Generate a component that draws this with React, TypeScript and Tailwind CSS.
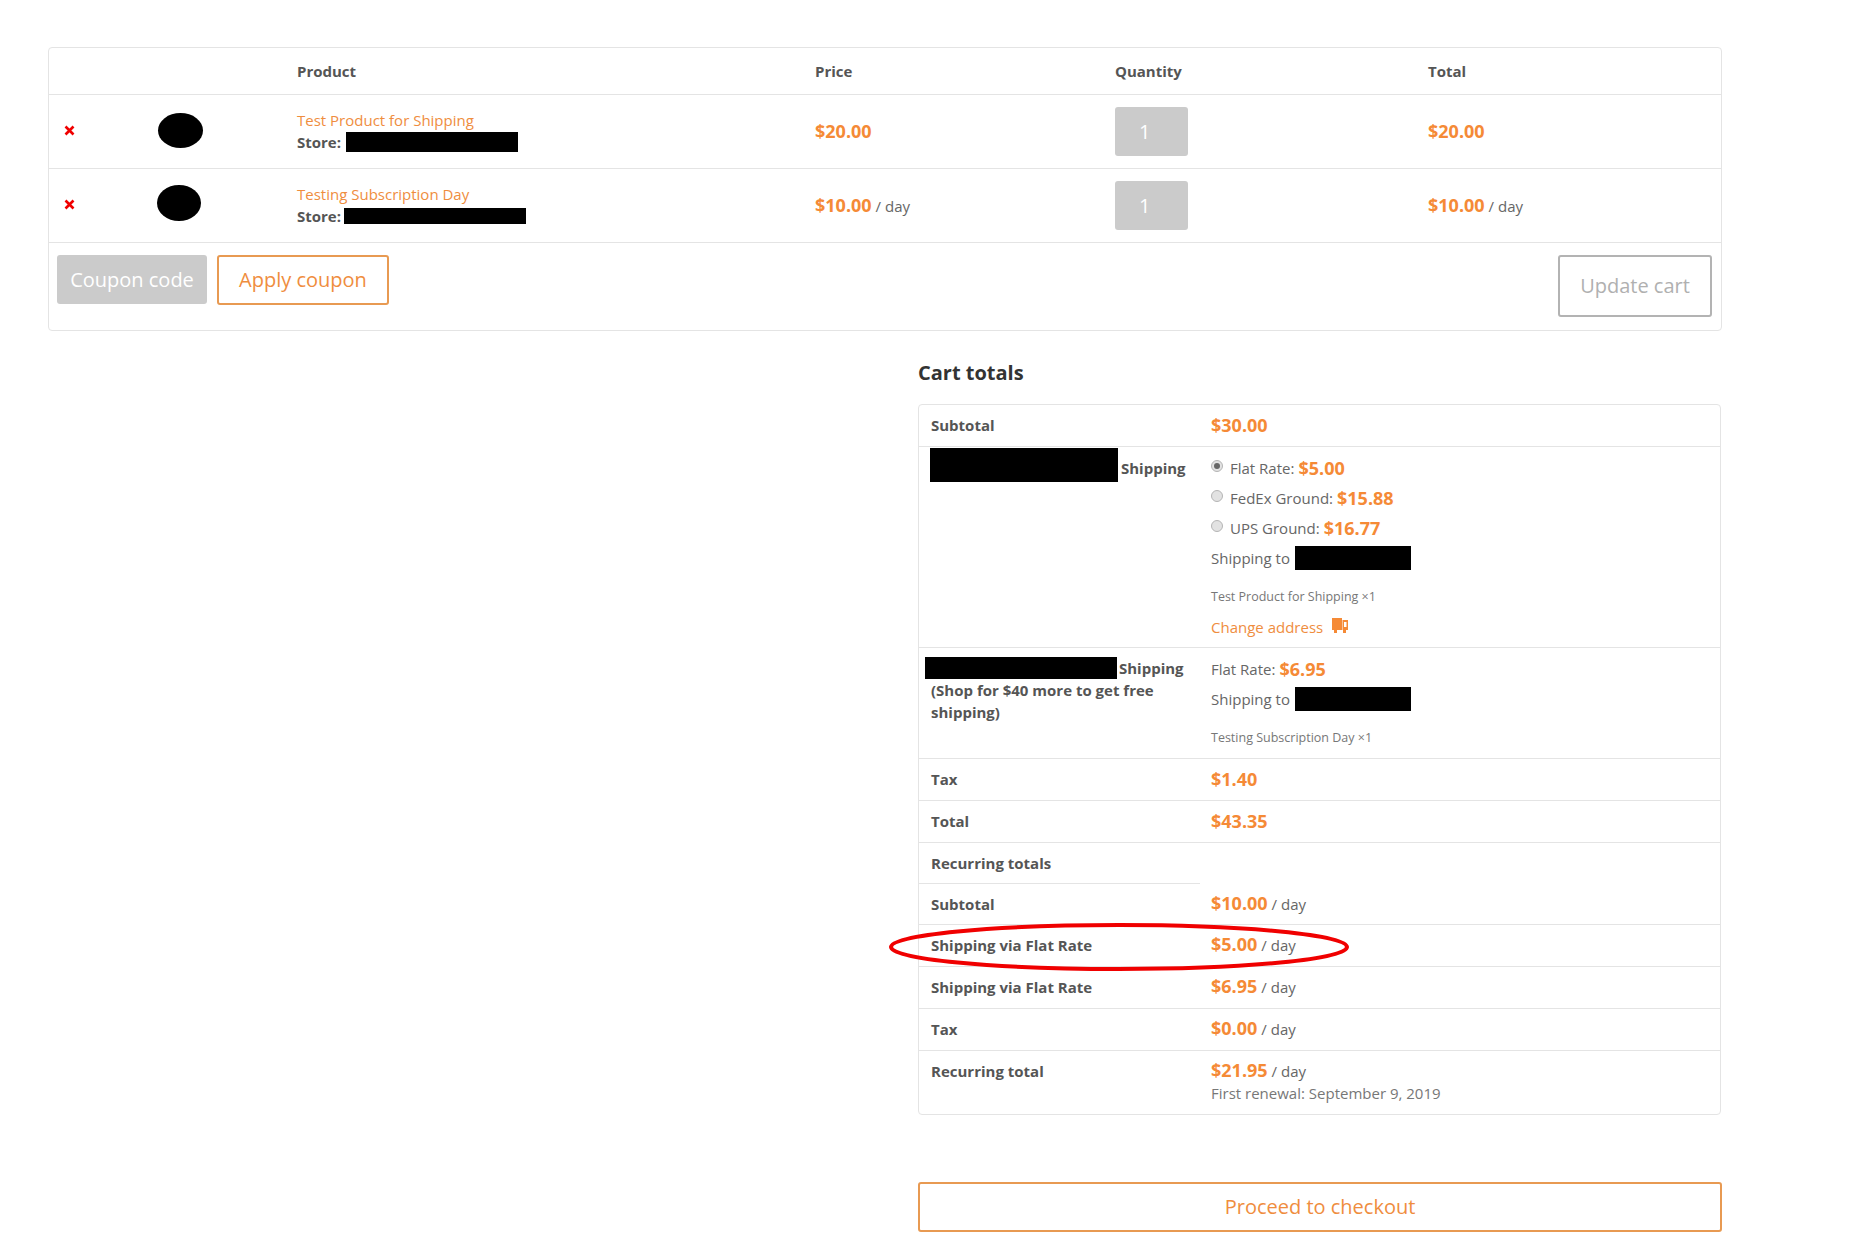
import React from 'react';

const font = 'font-["Open_Sans",sans-serif]';
const price = 'font-bold text-[18px] leading-none text-[#f58a36]';

function Redacted({ className }: { className: string }) {
  return <span className={`inline-block shrink-0 bg-black ${className}`} />;
}

function Price({ value, suffix, className }: { value: string; suffix?: string; className?: string }) {
  return (
    <div className={`flex items-baseline ${className ?? ''}`}>
      <span className={price}>{value}</span>
      {suffix && <span className="ml-1 text-[15px] leading-none text-[#666]">{suffix}</span>}
    </div>
  );
}

function Remove() {
  return (
    <svg width="11" height="11" viewBox="0 0 11 11" className="mb-[2px] block">
      <path d="M1.5 1.5l8 8M9.5 1.5l-8 8" stroke="#f00000" strokeWidth="2.6" />
    </svg>
  );
}

function CartRow({
  name,
  redact,
  blob,
  value,
  suffix,
}: {
  name: string;
  redact: string;
  blob: string;
  value: string;
  suffix?: string;
}) {
  return (
    <div className="grid h-[74px] grid-cols-[110px_123px_518px_300px_313px_1fr] items-center border-b border-[#e4e4e4] pl-[15px]">
      <Remove />
      <div className={`rounded-[50%] bg-black ${blob}`} />
      <div className="mb-[2px]">
        <div className="text-[15px] leading-[22px] text-[#ef8d3e]">{name}</div>
        <div className="flex items-center text-[15px] leading-[22px] font-bold text-[#555]">
          Store:
          <Redacted className={redact} />
        </div>
      </div>
      <Price value={value} suffix={suffix} className="mb-[2px]" />
      <div className="flex h-[49px] w-[73px] items-center rounded-[3px] bg-[#cbcbcb] pl-[24px] text-[20px] text-white">
        1
      </div>
      <Price value={value} suffix={suffix} className="mb-[2px]" />
    </div>
  );
}

function Row({
  label,
  children,
  height,
  pad = 'pt-[10px]',
}: {
  label: React.ReactNode;
  children?: React.ReactNode;
  height: string;
  pad?: string;
}) {
  return (
    <div className={`grid grid-cols-[292px_1fr] border-b border-[#e4e4e4] last:border-b-0 ${height}`}>
      <div className="pt-[9px] pl-[12px] text-[15px] leading-[22px] font-bold text-[#555]">{label}</div>
      <div className={`leading-[22px] ${pad}`}>{children}</div>
    </div>
  );
}

function Radio({ checked }: { checked?: boolean }) {
  return (
    <span className="mr-[7px] mb-[5px] flex size-[12px] items-center justify-center rounded-full border border-[#b5b5b5] bg-[#e2e2e2]">
      {checked && <span className="size-[6px] rounded-full bg-[#666]" />}
    </span>
  );
}

function Rate({ label, value, radio, checked }: { label: string; value: string; radio?: boolean; checked?: boolean }) {
  return (
    <div className="flex h-[30px] items-center text-[15px] text-[#666]">
      {radio && <Radio checked={checked} />}
      <span>{label}</span>
      <span className={`${price} ml-1`}>{value}</span>
    </div>
  );
}

function ShipTo() {
  return (
    <div className="flex h-[30px] items-center text-[15px] text-[#666]">
      Shipping to
      <Redacted className="ml-[5px] h-[24px] w-[116px]" />
    </div>
  );
}

export default function App() {
  return (
    <div className={`relative h-[1247px] bg-white pt-[47px] pl-[48px] ${font}`}>
      <div className="w-[1674px] rounded-[4px] border border-[#e4e4e4]">
        <div className="grid h-[47px] grid-cols-[248px_518px_300px_313px_1fr] items-center border-b border-[#e4e4e4] text-[15px] font-bold text-[#555]">
          <span />
          <span>Product</span>
          <span>Price</span>
          <span>Quantity</span>
          <span>Total</span>
        </div>
        <CartRow
          name="Test Product for Shipping"
          redact="ml-[5px] h-[20px] w-[172px]"
          blob="h-[35px] w-[45px] mb-[3px] ml-[-16px]"
          value="$20.00"
        />
        <CartRow
          name="Testing Subscription Day"
          redact="ml-[3px] h-[16px] w-[182px]"
          blob="h-[36px] w-[44px] mb-[6px] ml-[-17px]"
          value="$10.00"
          suffix="/ day"
        />
        <div className="flex h-[87px] items-start justify-between pt-[12px] pr-[9px] pl-[8px]">
          <div className="flex gap-[10px]">
            <div className="flex h-[49px] w-[150px] items-center justify-center rounded-[3px] bg-[#cbcbcb] text-[20px] text-white">
              Coupon code
            </div>
            <div className="flex h-[50px] w-[172px] items-center justify-center rounded-[3px] border-2 border-[#e89a52] text-[20px] text-[#ef8d3e]">
              Apply coupon
            </div>
          </div>
          <div className="flex h-[62px] w-[154px] items-center justify-center rounded-[3px] border-2 border-[#b3b3b3] text-[20px] text-[#b0b0b0]">
            Update cart
          </div>
        </div>
      </div>

      <div className="ml-[870px] w-[803px]">
        <h2 className="mt-[28px] h-[45px] text-[20px] leading-[27px] font-bold text-[#333]">Cart totals</h2>
        <div className="rounded-[4px] border border-[#e4e4e4]">
          <Row label="Subtotal" height="h-[42px]" pad="pt-[11px]">
            <Price value="$30.00" />
          </Row>
          <div className="grid h-[201px] grid-cols-[292px_1fr] border-b border-[#e4e4e4]">
            <div className="flex items-start pt-[1px] pl-[11px] text-[15px] font-bold text-[#555]">
              <Redacted className="h-[34px] w-[188px]" />
              <span className="mt-[3px] ml-[3px] leading-[34px]">Shipping</span>
            </div>
            <div className="pt-[6px]">
              <Rate radio checked label="Flat Rate:" value="$5.00" />
              <Rate radio label="FedEx Ground:" value="$15.88" />
              <Rate radio label="UPS Ground:" value="$16.77" />
              <ShipTo />
              <div className="mt-[13px] text-[12.5px] leading-[22px] text-[#777]">Test Product for Shipping ×1</div>
              <div className="mt-[8px] flex items-center text-[15px] leading-[22px] text-[#ef8d3e]">
                Change address
                <svg width="16" height="15" viewBox="0 0 16 15" className="mb-[3px] ml-[9px]">
                  <path d="M0 0h10v12H0z" fill="#f58a36" />
                  <path d="M10.5 2H16v10h-5.5z M12 4v5h2.5V4z" fill="#f58a36" fillRule="evenodd" />
                  <path d="M2 12h3v3H2z M11 12h3v3h-3z" fill="#f58a36" />
                </svg>
              </div>
            </div>
          </div>
          <div className="grid h-[111px] grid-cols-[292px_1fr] border-b border-[#e4e4e4]">
            <div className="pt-[9px] text-[15px] leading-[22px] font-bold text-[#555]">
              <div className="flex items-center pl-[6px]">
                <Redacted className="h-[22px] w-[192px]" />
                <span className="ml-[2px]">Shipping</span>
              </div>
              <div className="pr-[20px] pl-[12px]">(Shop for $40 more to get free shipping)</div>
            </div>
            <div className="pt-[6px]">
              <Rate label="Flat Rate:" value="$6.95" />
              <ShipTo />
              <div className="mt-[13px] text-[12.5px] leading-[22px] text-[#777]">Testing Subscription Day ×1</div>
            </div>
          </div>
          <Row label="Tax" height="h-[42px]" pad="pt-[11px]">
            <Price value="$1.40" />
          </Row>
          <Row label="Total" height="h-[42px]" pad="pt-[11px]">
            <Price value="$43.35" />
          </Row>
          <div className="grid h-[41px] grid-cols-[281px_1fr]">
            <div className="border-b border-[#e4e4e4] pt-[9px] pl-[12px] text-[15px] leading-[22px] font-bold text-[#555]">
              Recurring totals
            </div>
            <div />
          </div>
          <Row label="Subtotal" height="h-[41px]">
            <Price value="$10.00" suffix="/ day" />
          </Row>
          <Row label="Shipping via Flat Rate" height="h-[42px]">
            <Price value="$5.00" suffix="/ day" />
          </Row>
          <Row label="Shipping via Flat Rate" height="h-[42px]">
            <Price value="$6.95" suffix="/ day" />
          </Row>
          <Row label="Tax" height="h-[42px]">
            <Price value="$0.00" suffix="/ day" />
          </Row>
          <Row label="Recurring total" height="h-[63px]">
            <Price value="$21.95" suffix="/ day" />
            <div className="mt-[3px] text-[15px] leading-[22px] text-[#777]">First renewal: September 9, 2019</div>
          </Row>
        </div>
        <div className="mt-[67px] flex h-[50px] w-[804px] items-center justify-center rounded-[3px] border-2 border-[#e89a52] text-[20px] text-[#ef8d3e]">
          Proceed to checkout
        </div>
      </div>

      <svg width="462" height="50" viewBox="0 0 462 50" className="absolute top-[922px] left-[888px]">
        <ellipse cx="231" cy="25" rx="228" ry="22" fill="none" stroke="#f00000" strokeWidth="4" />
      </svg>
    </div>
  );
}
